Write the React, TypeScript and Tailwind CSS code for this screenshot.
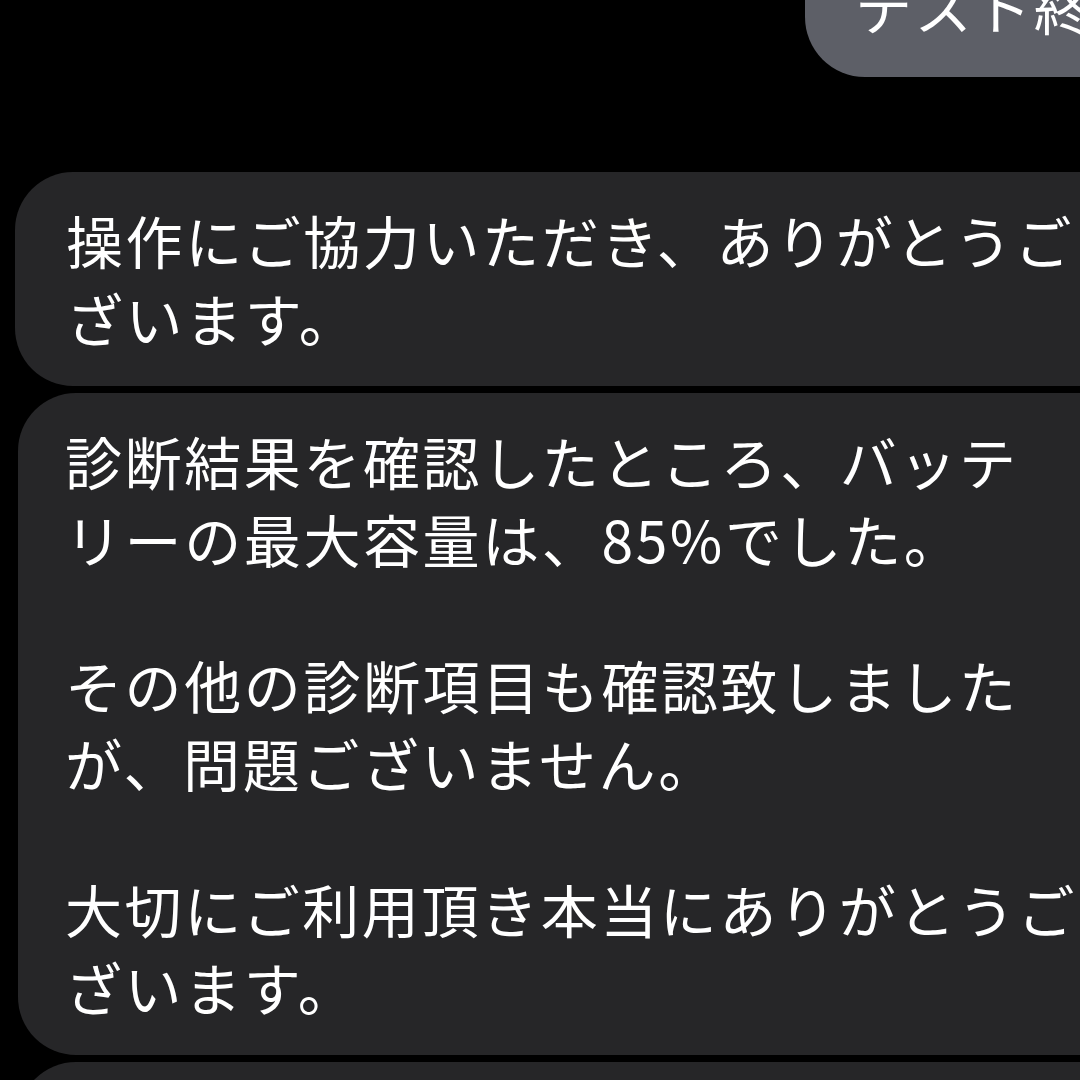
import React from "react";

const font = { fontFamily: '"Noto Sans CJK JP", "Noto Sans", sans-serif' };

function Line({ children }: { children: React.ReactNode }) {
  return <div className="whitespace-nowrap h-[78px] leading-[78px]">{children}</div>;
}

export default function App() {
  return (
    <div
      className="w-[1080px] h-[1080px] bg-black overflow-hidden text-white text-[57px] tracking-[2.6px]"
      style={font}
    >
      <div className="flex justify-end">
        <div className="-mt-[62px] w-[275px] bg-[#5d5f67] rounded-l-[60px] pl-[50px] pt-[28px] pb-[33px] overflow-hidden">
          <Line>テスト終了</Line>
        </div>
      </div>
      <div className="mt-[95px] flex flex-col gap-[7px]">
        <div className="ml-[15px] w-[1120px] bg-[#262628] rounded-[58px] pl-[51px] pt-[28px] pb-[30px]">
          <Line>操作にご協力いただき、ありがとうご</Line>
          <Line>ざいます。</Line>
        </div>
        <div className="ml-[18px] w-[1120px] bg-[#262628] rounded-[58px] pl-[47px] pt-[28px] pb-[30px]">
          <Line>診断結果を確認したところ、バッテ</Line>
          <Line>リーの最大容量は、85%でした。</Line>
          <div className="h-[68px]" />
          <Line>その他の診断項目も確認致しました</Line>
          <Line>が、問題ございません。</Line>
          <div className="h-[68px]" />
          <Line>大切にご利用頂き本当にありがとうご</Line>
          <Line>ざいます。</Line>
        </div>
        <div className="ml-[18px] w-[1120px] h-[200px] bg-[#262628] rounded-[58px]" />
      </div>
    </div>
  );
}
